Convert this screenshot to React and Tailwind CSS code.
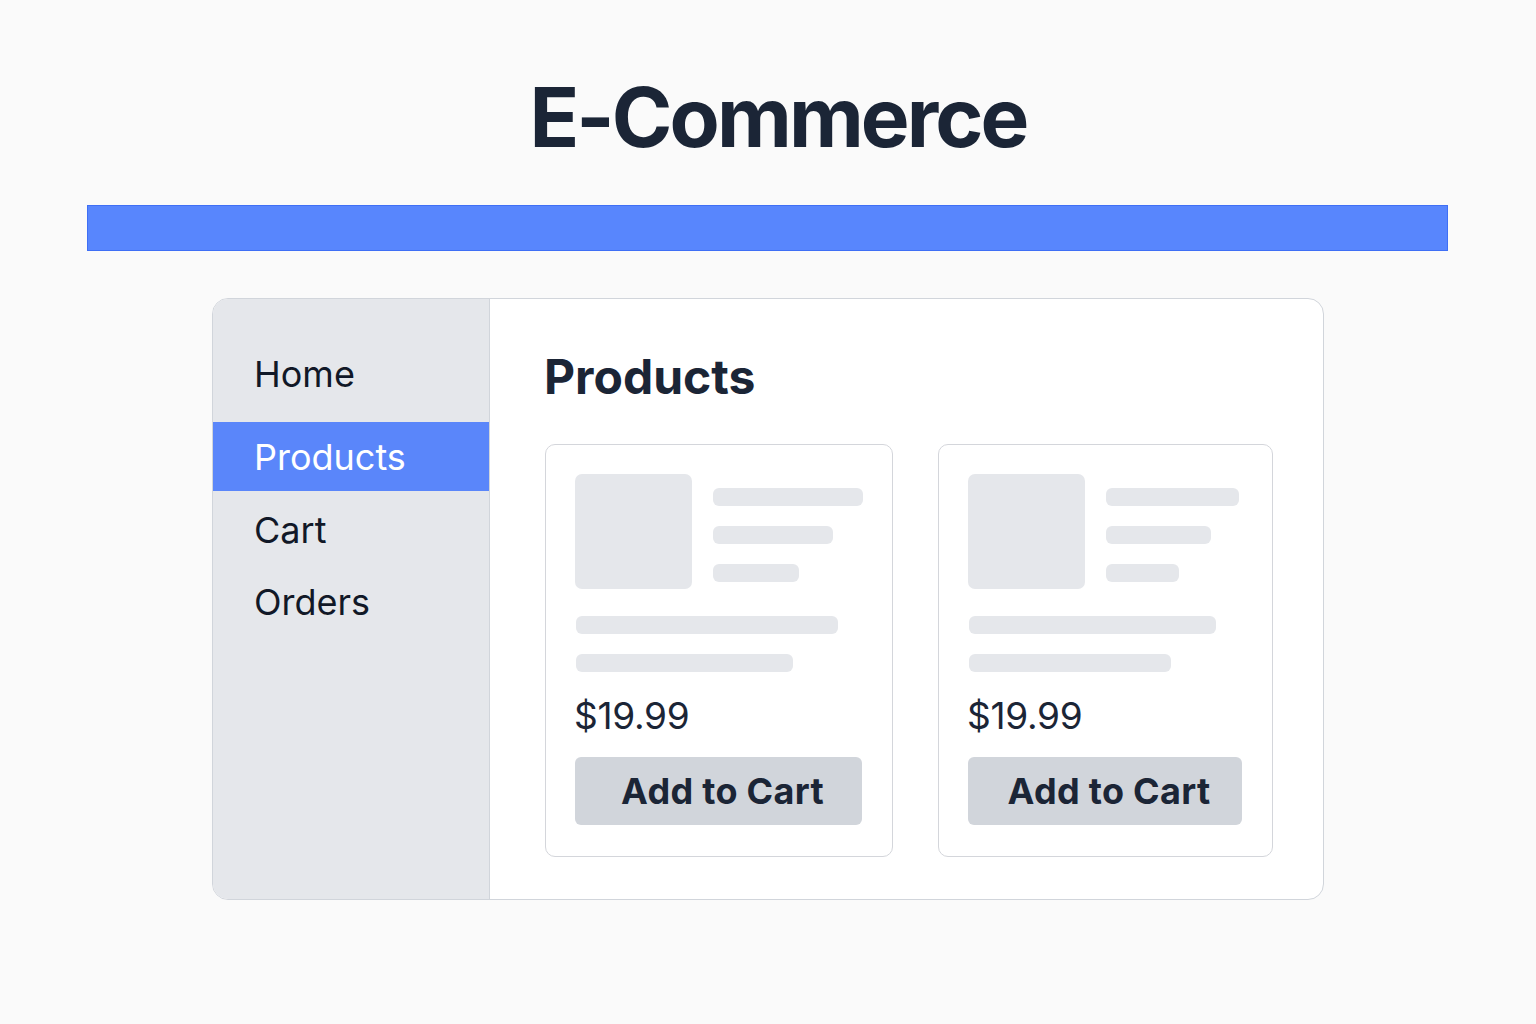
import React from "react";

const font = { fontFamily: "Inter, 'Noto Sans', sans-serif" };

function Card({ w, l1, l2, l3, f1, f2 }) {
  return (
    <div
      className="flex flex-col rounded-[10px] border border-[#d4d6db] bg-white pl-[29px] pr-[30px] pt-[29px] pb-[31px]"
      style={{ width: w }}
    >
      <div className="flex">
        <div className="h-[115px] w-[117px] shrink-0 rounded-[7px] bg-[#e5e7eb]" />
        <div className="ml-[21px] flex flex-col gap-[20px] pt-[14px]">
          <div className="h-[18px] rounded-[6px] bg-[#e5e7eb]" style={{ width: l1 }} />
          <div className="h-[18px] rounded-[6px] bg-[#e5e7eb]" style={{ width: l2 }} />
          <div className="h-[18px] rounded-[6px] bg-[#e5e7eb]" style={{ width: l3 }} />
        </div>
      </div>
      <div className="mt-[27px] ml-[1px] h-[18px] rounded-[6px] bg-[#e5e7eb]" style={{ width: f1 }} />
      <div className="mt-[20px] ml-[1px] h-[18px] rounded-[6px] bg-[#e5e7eb]" style={{ width: f2 }} />
      <div className="mt-[24px] -ml-[1px] h-[40px] text-[37px] leading-[40px] tracking-[-0.3px] text-[#1b2536]">$19.99</div>
      <button className="mt-[21px] flex h-[68px] w-full items-center justify-center rounded-[6px] bg-[#d1d5db] pl-[8px] text-[36px] font-bold tracking-[0.3px] text-[#1b2536]">
        Add to Cart
      </button>
    </div>
  );
}

export default function App() {
  return (
    <div className="min-h-screen w-full bg-[#fafafa] pt-[77px]" style={font}>
      <h1 className="pl-[20px] text-center text-[82px] font-bold leading-none tracking-[-2.9px] text-[#1b2536]">
        E-Commerce
      </h1>
      <div className="ml-[87px] mt-[46px] h-[46px] w-[1361px] border border-[#3f6ff5] bg-[#5886fd]" />
      <div className="ml-[212px] mt-[47px] flex h-[602px] w-[1112px] overflow-hidden rounded-[16px] border border-[#d1d5db] bg-white">
        <div className="flex w-[277px] shrink-0 flex-col border-r border-[#d1d5db] bg-[#e5e7eb] pt-[39px] text-[36px] text-[#111827]">
          <div className="flex h-[72px] items-center pl-[41px]">Home</div>
          <div className="mt-[12px] flex h-[69px] items-center bg-[#5a86fa] pl-[41px] text-white">Products</div>
          <div className="mt-[3px] flex h-[72px] items-center pl-[41px]">Cart</div>
          <div className="flex h-[72px] items-center pl-[41px]">Orders</div>
        </div>
        <div className="flex flex-1 flex-col pl-[55px] pt-[54px]">
          <h2 className="-ml-[1px] text-[48px] font-bold leading-none tracking-[0px] text-[#1b2536]">Products</h2>
          <div className="mt-[43px] flex gap-[45px]">
            <Card w={348} l1={150} l2={120} l3={86} f1={262} f2={217} />
            <Card w={335} l1={133} l2={105} l3={73} f1={247} f2={202} />
          </div>
        </div>
      </div>
    </div>
  );
}
